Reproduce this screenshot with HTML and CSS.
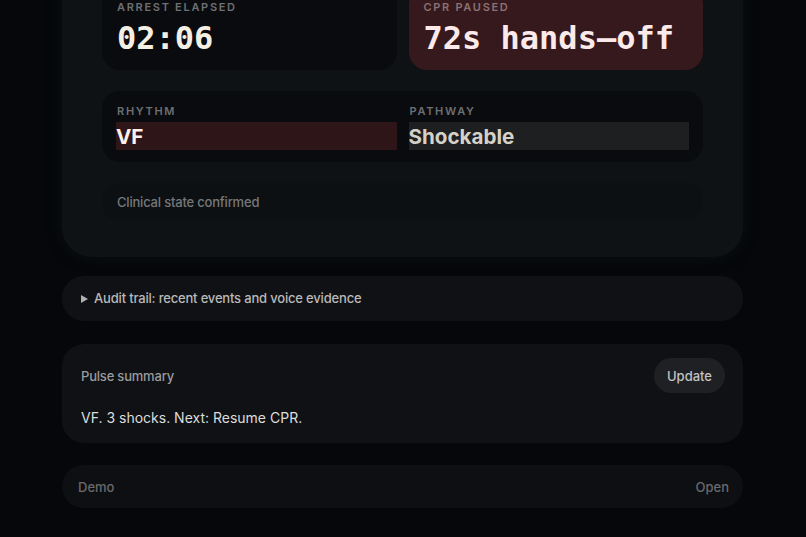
FILE: index.html
```html
<!DOCTYPE html>
<html>
<head>
<meta charset="utf-8">
<link rel="stylesheet" href="styles.css">
</head>
<body>
<main class="page">
  <section class="state-card">
    <div class="timers">
      <div class="tile">
        <div class="label">Arrest elapsed</div>
        <div class="big">02:06</div>
      </div>
      <div class="tile tile-alert">
        <div class="label">CPR paused</div>
        <div class="big">72s hands–off</div>
      </div>
    </div>
    <div class="tile rhythm">
      <div class="field">
        <div class="label">Rhythm</div>
        <div class="value value-red">VF</div>
      </div>
      <div class="field">
        <div class="label">Pathway</div>
        <div class="value value-grey">Shockable</div>
      </div>
    </div>
    <div class="confirm">Clinical state confirmed</div>
  </section>

  <details class="panel audit">
    <summary>Audit trail: recent events and voice evidence</summary>
  </details>

  <section class="panel pulse">
    <div class="pulse-head">
      <span class="pulse-title">Pulse summary</span>
      <button class="btn">Update</button>
    </div>
    <p class="pulse-text">VF. 3 shocks. Next: Resume CPR.</p>
  </section>

  <section class="panel demo">
    <span>Demo</span>
    <span>Open</span>
  </section>
</main>
</body>
</html>
```

FILE: styles.css
```css
* { box-sizing: border-box; }
html, body {
  margin: 0;
  padding: 0;
  background: #05070a;
  font-family: Inter, "Noto Sans", sans-serif;
  color: #ddd;
  overflow: hidden;
}
.page {
  width: 681px;
  margin: -54px 0 0 62px;
  display: flex;
  flex-direction: column;
}
.state-card {
  background: #0f1215;
  border-radius: 30px;
  padding: 40px 40px 37px;
  display: flex;
  flex-direction: column;
  gap: 21px;
  box-shadow: 0 0 14px rgba(20, 26, 32, 0.5);
}
.timers {
  display: grid;
  grid-template-columns: 1fr 1fr;
  gap: 12px;
}
.tile {
  background: #0a0b0e;
  border-radius: 18px;
  padding: 14px 15px 13px;
}
.tile-alert {
  background: #35191c;
}
.label {
  font-size: 11px;
  line-height: 14px;
  font-weight: 600;
  letter-spacing: 1.7px;
  text-transform: uppercase;
  color: #6d7073;
}
.tile-alert .label { color: #8c7072; }
.big {
  margin-top: 5px;
  font-family: "DejaVu Sans Mono", monospace;
  font-weight: 700;
  font-size: 32px;
  line-height: 38px;
  color: #f4efe3;
}
.tile-alert .big { color: #fce9e9; }
.rhythm {
  display: grid;
  grid-template-columns: 1fr 1fr;
  gap: 12px;
  padding: 13px 14px 12px;
}
.rhythm .label { padding-left: 1px; }
.value {
  margin-top: 4px;
  height: 28px;
  line-height: 29px;
  font-size: 20.6px;
  font-weight: 700;
}
.value-red { background: #2e1618; color: #fcefee; }
.value-grey { background: #1e1f21; color: #d5d1c7; }
.confirm {
  background: #0d1013;
  border-radius: 16px;
  padding: 0 15px;
  height: 37px;
  line-height: 38px;
  font-size: 13px;
  font-weight: 500;
  letter-spacing: -0.2px;
  color: #75787b;
}
.panel {
  border-radius: 22px;
  background: #101114;
}
.audit {
  margin-top: 19px;
  height: 45px;
}
.audit summary {
  list-style: none;
  cursor: pointer;
  padding: 0 19px;
  line-height: 45px;
  font-size: 13px;
  font-weight: 500;
  letter-spacing: -0.18px;
  color: #b9b9b9;
  display: flex;
  align-items: center;
}
.audit summary::-webkit-details-marker { display: none; }
.audit summary::before {
  content: "";
  width: 0;
  height: 0;
  border-left: 7px solid #b0b0b0;
  border-top: 4px solid transparent;
  border-bottom: 4px solid transparent;
  margin-right: 6px;
}
.pulse {
  margin-top: 23px;
  height: 99px;
  padding: 14px 18px 0 19px;
  background: #0f1114;
}
.pulse-head {
  display: flex;
  align-items: center;
  justify-content: space-between;
}
.pulse-title {
  font-size: 13px;
  font-weight: 500;
  letter-spacing: -0.2px;
  color: #999b9d;
}
.btn {
  font-family: inherit;
  font-size: 13px;
  font-weight: 500;
  color: #c2c2c2;
  background: #1e2023;
  border: none;
  border-radius: 18px;
  height: 35px;
  width: 71px;
  padding: 0;
}
.pulse-text {
  margin: 16px 0 0;
  font-size: 14px;
  color: #dcdcdc;
}
.demo {
  margin-top: 22px;
  height: 43px;
  padding: 0 14px 0 16px;
  background: #0e0f12;
  display: flex;
  align-items: center;
  justify-content: space-between;
  font-size: 13px;
  font-weight: 500;
  color: #686a6c;
}
```
